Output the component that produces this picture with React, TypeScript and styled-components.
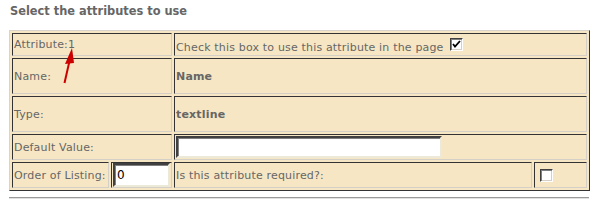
import React from "react";
import styled, { createGlobalStyle } from "styled-components";

const Global = createGlobalStyle`
  html, body { margin: 0; padding: 0; background: #ffffff; }
  body { font-family: "DejaVu Sans", Verdana, sans-serif; }
`;

const Page = styled.div`
  position: relative;
  width: 602px;
  height: 208px;
  padding: 3px 0 0 9px;
  box-sizing: border-box;
`;

const Heading = styled.h3`
  margin: 0 0 11px 1px;
  font-size: 11.4px;
  line-height: 16px;
  font-weight: bold;
  color: #666666;
`;

const Form = styled.div`
  display: grid;
  grid-template-columns: 97px 61px 358px 53px;
  grid-template-rows: 23px 36px 36px 26px 26px;
  gap: 2px;
  padding: 2px;
  width: 581px;
  box-sizing: border-box;
  background: #f6e6c4;
  border: 1px solid;
  border-color: #d8d4cc #333333 #333333 #d8d4cc;
`;

const Cell = styled.div<{ $span?: number; $bold?: boolean }>`
  grid-column: span ${(p) => p.$span ?? 1};
  display: flex;
  align-items: center;
  box-sizing: border-box;
  padding: 0 1px;
  border: 1px solid;
  border-color: #333333 #d4d0c8 #d4d0c8 #333333;
  font-size: 11px;
  letter-spacing: 0.17px;
  color: #666666;
  font-weight: ${(p) => (p.$bold ? "bold" : "normal")};
  white-space: nowrap;
`;

const LowText = styled.span`
  display: inline-block;
  padding-top: 5px;
`;

const TextBox = styled.input<{ $w: number; $h: number }>`
  width: ${(p) => p.$w}px;
  height: ${(p) => p.$h}px;
  box-sizing: border-box;
  margin: 0;
  padding: 0 2px;
  border: 2px solid;
  border-color: #404040 #ece9d8 #ece9d8 #404040;
  box-shadow: inset 1px 1px 0 #808080;
  background: #ffffff;
  font-family: "DejaVu Sans", Verdana, sans-serif;
  font-size: 12px;
  color: #000000;
  outline: none;
`;

const Box = styled.span<{ $ml?: number }>`
  display: inline-flex;
  align-items: center;
  justify-content: center;
  width: 13px;
  height: 13px;
  box-sizing: border-box;
  margin-left: ${(p) => p.$ml ?? 0}px;
  border: 1px solid;
  border-color: #404040 #ffffff #ffffff #404040;
  box-shadow: inset 1px 1px 0 #808080, inset -1px -1px 0 #d4d0c8;
  background: #ffffff;
`;

const Rule = styled.div`
  width: 580px;
  height: 0;
  margin-top: 6px;
  border-top: 1px solid #9a9a9a;
  border-bottom: 1px solid #e0e0e0;
`;

const Arrow = styled.svg`
  position: absolute;
  left: 0;
  top: 0;
  pointer-events: none;
`;

const Check = ({ checked, ml }: { checked?: boolean; ml?: number }) => (
  <Box $ml={ml}>
    {checked && (
      <svg width="9" height="9" viewBox="0 0 9 9">
        <path d="M1 4 L3 6.5 L8 1" stroke="#000" strokeWidth="1.8" fill="none" />
      </svg>
    )}
  </Box>
);

export default function App() {
  return (
    <>
      <Global />
      <Page>
        <Heading>Select the attributes to use</Heading>
        <Form>
          <Cell $span={2}>Attribute:1</Cell>
          <Cell $span={2}>
            <LowText>Check this box to use this attribute in the page</LowText>
            <Check checked ml={6} />
          </Cell>
          <Cell $span={2}>Name:</Cell>
          <Cell $span={2} $bold>
            Name
          </Cell>
          <Cell $span={2}>Type:</Cell>
          <Cell $span={2} $bold>
            textline
          </Cell>
          <Cell $span={2}>Default Value:</Cell>
          <Cell $span={2}>
            <TextBox $w={266} $h={22} defaultValue="" />
          </Cell>
          <Cell>Order of Listing:</Cell>
          <Cell>
            <TextBox $w={57} $h={24} defaultValue="0" />
          </Cell>
          <Cell>Is this attribute required?:</Cell>
          <Cell>
            <Check ml={4} />
          </Cell>
        </Form>
        <Rule />
        <Arrow width="602" height="208" viewBox="0 0 602 208">
          <path d="M64.5 83 L69.5 61" stroke="#cc0000" strokeWidth="2" />
          <path d="M72 48 L65 64 L74 63 Z" fill="#cc0000" />
        </Arrow>
      </Page>
    </>
  );
}
